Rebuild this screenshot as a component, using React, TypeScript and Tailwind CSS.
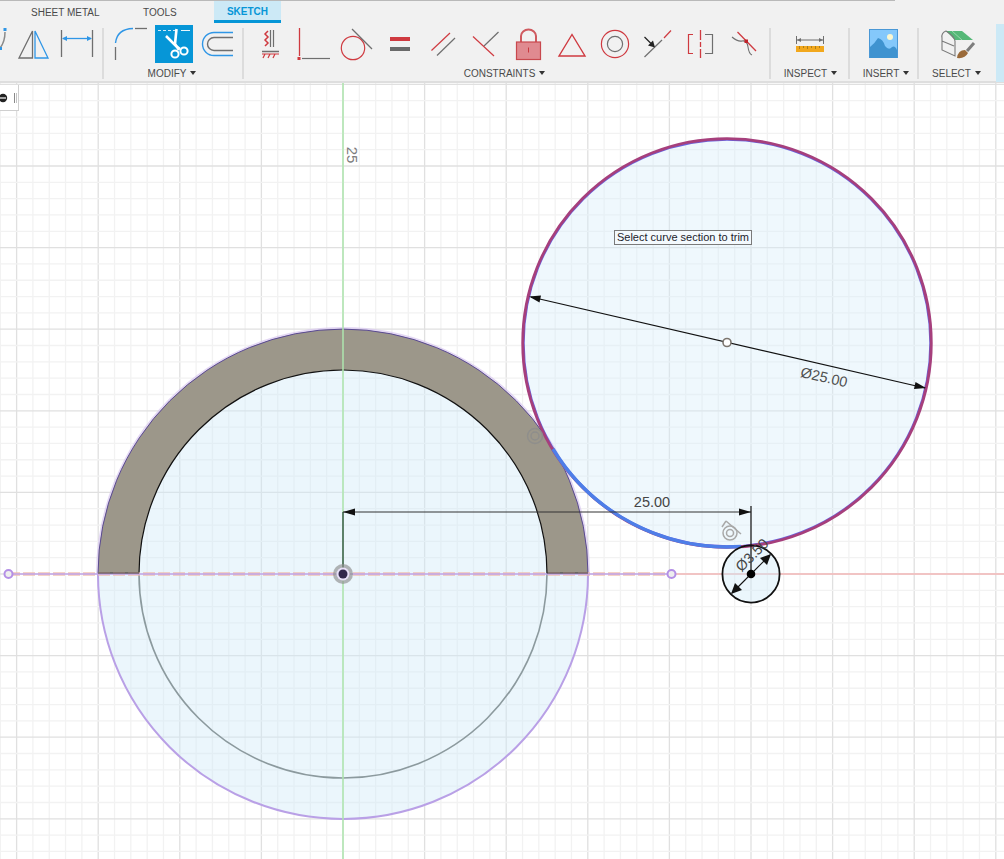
import React from "react";

const RED = "#cf3a40";
const GRAY = "#6f6f6f";
const BLUE = "#2f96e6";

function Icon({ x, w, className, children }: { x: number; w: number; className?: string; children?: React.ReactNode }) {
  return (
    <svg width={w} height={38} viewBox={`${x} 25 ${w} 38`} className={className} fill="none">
      {children}
    </svg>
  );
}

function Caret() {
  return (
    <svg width="6" height="4" viewBox="0 0 6 4" className="ml-[4px] mb-[2px]">
      <path d="M0 0H6L3 4Z" fill="#333" />
    </svg>
  );
}

function Label({ text, className }: { text: string; className?: string }) {
  return (
    <div className={`mt-[1px] flex h-[19px] items-center justify-center text-[10px] leading-none text-[#4a4a4a] ${className ?? ""}`}>
      <span>{text}</span>
      <Caret />
    </div>
  );
}

function Sep() {
  return <div className="mt-[5px] h-[51px] w-[2px] shrink-0 bg-[#dcdcdc]" />;
}

function Toolbar() {
  return (
    <div className="h-[83px] shrink-0 border-b-2 border-[#dedede] bg-[#f1f1f1] font-['Liberation_Sans',sans-serif]">
      <div className="h-[1px] w-[895px] bg-[#b9b9b9]" />
      <div className="flex h-[22px] whitespace-nowrap text-[10px] leading-none text-[#4a4a4a]">
        <div className="ml-[31px] flex w-[68px] items-center pt-[1px]">SHEET METAL</div>
        <div className="ml-[44px] flex w-[36px] items-center pt-[1px]">TOOLS</div>
        <div className="ml-[35px] flex w-[67px] items-center justify-center border-b-[3px] border-[#0696d7] bg-[#cce9f6] pt-[2px] font-bold text-[#0696d7]">
          SKETCH
        </div>
      </div>
      <div className="flex h-[59px]">
        <div className="w-[102px] shrink-0 pt-[2px]">
          <div className="flex h-[38px]">
            <Icon x={0} w={13}>
              <path d="M5 32Q5 42 0 48" stroke="#8a8a8a" strokeWidth="1.5" />
              <rect x="3.5" y="28" width="3" height="3" fill={BLUE} />
              <rect x="0" y="47" width="2" height="3" fill={BLUE} />
            </Icon>
            <Icon x={13} w={42}>
              <path d="M32.5 31L19 58H32.5Z" stroke={GRAY} strokeWidth="1.3" />
              <path d="M35 31L48 58H35Z" stroke={BLUE} strokeWidth="1.3" />
            </Icon>
            <Icon x={55} w={43}>
              <path d="M61.5 30V57M92.5 30V57" stroke={GRAY} strokeWidth="1.3" />
              <path d="M63 38.5H91" stroke={BLUE} strokeWidth="1.3" />
              <path d="M62 38.5L67 36V41ZM92 38.5L87 36V41Z" fill={BLUE} />
            </Icon>
          </div>
        </div>
        <Sep />
        <div className="w-[138px] shrink-0 pt-[2px]">
          <div className="ml-[4px] flex h-[38px]">
            <Icon x={108} w={44}>
              <path d="M135 28.5H147" stroke={GRAY} strokeWidth="1.3" />
              <path d="M115.5 43Q117 29 133 28.5" stroke={BLUE} strokeWidth="1.4" />
              <path d="M115.5 47V60" stroke={GRAY} strokeWidth="1.3" />
            </Icon>
            <Icon x={155} w={38} className="ml-[3px] bg-[#0696d7]">
              <path d="M158 30.5H177" stroke="#cfeaf8" strokeDasharray="3 2" />
              <path d="M181 30.5H190" stroke="#e8f6fc" />
              <path d="M176.5 29L175 44L179 50" stroke="#fff" strokeWidth="2.6" />
              <path d="M166 36L176 46L180 49" stroke="#fff" strokeWidth="2.6" />
              <circle cx="175" cy="54" r="3.6" stroke="#fff" strokeWidth="2" />
              <circle cx="184" cy="51" r="3.6" stroke="#fff" strokeWidth="2" />
            </Icon>
            <Icon x={196} w={42} className="ml-[3px]">
              <path d="M233 32.5H214A11.5 11.5 0 0 0 214 55.5H233" stroke={BLUE} strokeWidth="1.4" />
              <path d="M233 37.5H214A6.5 6.5 0 0 0 214 50.5H233" stroke={GRAY} strokeWidth="1.4" />
            </Icon>
          </div>
          <Label text="MODIFY" className="pr-[2px]" />
        </div>
        <Sep />
        <div className="w-[525px] shrink-0 pt-[2px]">
          <div className="ml-[4px] flex h-[38px]">
            <Icon x={248} w={43}>
              <path d="M270.5 30V47M273.5 30V47" stroke={GRAY} strokeWidth="1.2" />
              <path d="M268 31L265 34L268 37L265 40L268 43L265 46" stroke={RED} strokeWidth="1.5" />
              <path d="M262 51.5H279" stroke={GRAY} strokeWidth="1.5" />
              <path d="M262 54H279M265 54L263 58M270 54L268 58M275 54L273 58" stroke={RED} strokeWidth="1.2" />
            </Icon>
            <Icon x={291} w={43}>
              <path d="M299.5 28V56" stroke={RED} strokeWidth="1.3" />
              <rect x="297.5" y="57" width="3" height="3" fill={RED} />
              <path d="M302 58.5H330" stroke={GRAY} strokeWidth="1.2" />
            </Icon>
            <Icon x={334} w={43}>
              <circle cx="353" cy="48" r="11.7" stroke={RED} strokeWidth="1.2" />
              <path d="M352 29L372 49" stroke={GRAY} strokeWidth="1.2" />
            </Icon>
            <Icon x={377} w={43}>
              <rect x="390" y="37" width="20" height="4" fill={RED} />
              <rect x="390" y="47" width="20" height="4" fill="#6a6a6a" />
            </Icon>
            <Icon x={420} w={43}>
              <path d="M431.5 50.5L450 33" stroke={RED} strokeWidth="1.2" />
              <path d="M437 55.5L455 38" stroke={GRAY} strokeWidth="1.2" />
            </Icon>
            <Icon x={463} w={43}>
              <path d="M473 36.5L494 56" stroke={RED} strokeWidth="1.2" />
              <path d="M484 46L498.5 32" stroke={GRAY} strokeWidth="1.2" />
            </Icon>
            <Icon x={506} w={43}>
              <path d="M521 42V36A7.5 6.5 0 0 1 536 36V42" stroke="#cf5a5f" strokeWidth="2" />
              <rect x="516.5" y="42" width="24" height="17.5" fill="#e08a90" stroke="#c8484e" strokeWidth="1.2" />
              <path d="M528.5 47.5V52.5" stroke="#c8383e" strokeWidth="1" />
            </Icon>
            <Icon x={549} w={43}>
              <path d="M572 34.5L559 56H585Z" stroke={RED} strokeWidth="1.4" />
            </Icon>
            <Icon x={592} w={43}>
              <circle cx="615" cy="44" r="13.6" stroke={RED} strokeWidth="1.2" />
              <circle cx="615" cy="44" r="7.6" stroke={GRAY} strokeWidth="1.2" />
            </Icon>
            <Icon x={635} w={43}>
              <path d="M644.5 57L662 40" stroke={GRAY} strokeWidth="1.2" />
              <path d="M664 38L671 30.5" stroke={RED} strokeWidth="1.2" />
              <path d="M644.5 37L651 43.5" stroke="#222" strokeWidth="1.2" />
              <path d="M655 47.5L648 45.5L653 40.5Z" fill="#222" />
            </Icon>
            <Icon x={678} w={43}>
              <path d="M693 34.5H688.5V53.5H693" stroke={RED} strokeWidth="1.2" />
              <path d="M700.5 30V58" stroke={RED} strokeWidth="1.3" strokeDasharray="10 2 5 2 9" />
              <path d="M705 34.5H712.5V53.5H705" stroke={GRAY} strokeWidth="1.2" />
            </Icon>
            <Icon x={721} w={43}>
              <path d="M732 37Q738 42 742 41Q747 40 748 47Q749 54 752 55" stroke={GRAY} strokeWidth="1.1" />
              <path d="M737.5 32L756 51" stroke={RED} strokeWidth="1.3" />
              <rect x="744.5" y="39.5" width="3.5" height="3.5" fill="#c02228" />
            </Icon>
          </div>
          <Label text="CONSTRAINTS" className="pr-[4px]" />
        </div>
        <Sep />
        <div className="w-[77px] shrink-0 pt-[2px]">
          <div className="flex h-[38px] justify-center">
            <Icon x={791} w={38}>
              <path d="M796.5 36V44M823.5 36V44M797 40H823" stroke={GRAY} strokeWidth="1" />
              <path d="M797 40L801 38V42ZM823 40L819 38V42Z" fill={GRAY} />
              <rect x="796" y="46" width="28" height="6" fill="#f2a81d" />
              <path d="M799.5 46V49M803.5 46V48M807.5 46V49M811.5 46V48M815.5 46V49M819.5 46V48" stroke="#9a7418" strokeWidth="0.8" />
            </Icon>
          </div>
          <Label text="INSPECT" className="pl-[2px]" />
        </div>
        <Sep />
        <div className="w-[67px] shrink-0 pt-[2px]">
          <div className="flex h-[38px] justify-center">
            <Icon x={866} w={35}>
              <rect x="869.5" y="29.5" width="28" height="28" fill="#84c8fb" stroke="#4a98d6" />
              <circle cx="890" cy="37" r="3" fill="#fbf7d0" />
              <path d="M870 58V47Q875 43 878 38Q883 39 885 46Q889 51 892 47Q895 45 897 50V58Z" fill="#3f93d0" />
            </Icon>
          </div>
          <Label text="INSERT" className="pl-[5px]" />
        </div>
        <Sep />
        <div className="w-[77px] shrink-0 pt-[2px]">
          <div className="flex h-[38px] justify-center">
            <Icon x={938} w={36}>
              <path d="M944 31H960L971 40H953Z" fill="#55b877" />
              <path d="M950 31L960 40" stroke="#a9dcb9" strokeWidth="0.8" />
              <path d="M944 31Q939 33 940 38V50L953 56V41Q952 36 944 31ZM940 41L952 46" stroke="#7a7a7a" strokeWidth="1.1" />
              <path d="M972 43L965 51" stroke="#7d7d7d" strokeWidth="3" />
              <path d="M963 50Q956 50 955 58Q963 59 966 53Z" fill="#9a6a3a" />
            </Icon>
          </div>
          <Label text="SELECT" className="pr-[2px]" />
        </div>
        <div className="mt-[1px] h-[58px] flex-1 bg-[#cce9f6]" />
      </div>
    </div>
  );
}

const OX = 343;
const OY = 574;
const STEP = 16.32;
const range = (a: number, b: number) => Array.from({ length: b - a + 1 }, (_, i) => a + i);

function Canvas() {
  return (
    <svg width={1004} height={776} viewBox="0 83 1004 776" className="block" fill="none">
      {range(-21, 41).map((i) => (
        <line
          key={`v${i}`}
          x1={OX + i * STEP}
          x2={OX + i * STEP}
          y1={83}
          y2={859}
          stroke={i % 5 === 0 ? "#e0e0e0" : "#f2f2f2"}
          strokeWidth={1.3}
        />
      ))}
      {range(-30, 18).map((i) => (
        <line
          key={`h${i}`}
          x1={0}
          x2={1004}
          y1={OY + i * STEP}
          y2={OY + i * STEP}
          stroke={i % 5 === 0 ? "#e0e0e0" : "#f2f2f2"}
          strokeWidth={1.3}
        />
      ))}
      <path d="M671 574H1004" stroke="#f5b9b9" strokeWidth="1.5" />

      <path d="M98 574A245 245 0 0 0 588 574Z" fill="#cfe9f9" fillOpacity="0.42" />
      <path d="M139 574A204 204 0 0 1 547 574Z" fill="#cfe9f9" fillOpacity="0.42" />
      <circle cx="727" cy="343" r="204" fill="#d6edfb" fillOpacity="0.4" />
      <circle cx="751" cy="574" r="28.6" fill="#cfe9f9" fillOpacity="0.42" />

      <path d="M98 574A245 245 0 0 1 588 574" stroke="#d8c8f0" strokeWidth="4" opacity="0.7" />
      <path d="M98 574A245 245 0 0 1 588 574H547A204 204 0 0 0 139 574Z" fill="#9c978a" />
      <path d="M98 574A245 245 0 0 1 588 574" stroke="#5a4a92" strokeWidth="1" />
      <path d="M139 574A204 204 0 0 1 547 574" stroke="#111" strokeWidth="1.2" />
      <path d="M139 574A204 204 0 0 0 547 574" stroke="#8c9a9e" strokeWidth="1.6" />
      <path d="M98 574A245 245 0 0 0 588 574" stroke="#b9a0e6" strokeWidth="2" />

      <path d="M343 83V859" stroke="#aee6ae" strokeWidth="1.5" />
      <path d="M343 512V574" stroke="#3e5f4c" strokeWidth="1.5" />

      <path d="M8 574H671" stroke="#eeb8a8" strokeWidth="3.5" strokeDasharray="12 3" opacity="0.85" />
      <path d="M8 574H671" stroke="#c2a6ea" strokeWidth="1.5" />
      <path d="M98 573H139M547 573H588" stroke="#3a3a3a" strokeWidth="1" />
      <circle cx="8.5" cy="574" r="4" fill="#eee" stroke="#b48fe6" strokeWidth="2" />
      <circle cx="671.5" cy="574" r="4" fill="#eee" stroke="#b48fe6" strokeWidth="2" />
      <circle cx="343" cy="574" r="10" fill="#8e8e8e" fillOpacity="0.65" />
      <circle cx="343" cy="574" r="6.5" fill="#e8e0f8" />
      <circle cx="343" cy="574" r="4.5" fill="#32284c" />

      <circle cx="727" cy="343" r="203" stroke="#6a62dc" strokeWidth="1.4" />
      <circle cx="727" cy="343" r="204.3" stroke="#a63f7c" strokeWidth="2.8" />
      <path d="M553 449A204 204 0 0 0 741 546.5" stroke="#4e7ee8" strokeWidth="3.4" />

      <circle cx="751" cy="574" r="28.6" stroke="#111" strokeWidth="1.8" />

      <g stroke="#8d8d8d" strokeWidth="1.4" opacity="0.85">
        <circle cx="535" cy="436" r="7.5" />
        <circle cx="535" cy="436" r="4" />
      </g>
      <g stroke="#a8a8a8" strokeWidth="1.5">
        <circle cx="730" cy="533" r="7" />
        <circle cx="730" cy="533" r="3.5" />
        <path d="M726 521L741 534M726 521L722 527" />
      </g>

      <path d="M343 512H751" stroke="#333" strokeWidth="1.2" />
      <path d="M751 506V574" stroke="#111" strokeWidth="1.2" />
      <path d="M751 512L739 508.5V515.5Z" fill="#111" />
      <path d="M343 512L355 508.5V515.5Z" fill="#111" />
      <text x="652" y="506.5" textAnchor="middle" fontFamily="Liberation Sans, sans-serif" fontSize="14.5" fill="#454545">25.00</text>

      <path d="M531 297L925 388" stroke="#111" strokeWidth="1.2" />
      <path d="M529 296.5L541 295.5L539.5 302.5Z" fill="#111" />
      <path d="M926 388L914 389L915.5 382Z" fill="#111" />
      <circle cx="727" cy="342.5" r="4" fill="#fff" stroke="#7b756e" strokeWidth="1.6" />
      <text transform="translate(823 382) rotate(13)" textAnchor="middle" fontFamily="Liberation Sans, sans-serif" fontSize="14.5" fill="#505050">Ø25.00</text>

      <path d="M732 593L770 555" stroke="#111" strokeWidth="1.2" />
      <path d="M731 594L735 583L742 590Z" fill="#111" />
      <path d="M771 554L767 565L760 558Z" fill="#111" />
      <circle cx="751" cy="574" r="4.3" fill="#000" />
      <text transform="translate(755.5 558.5) rotate(-45)" textAnchor="middle" fontFamily="Liberation Sans, sans-serif" fontSize="14.5" fill="#454545">Ø3.50</text>

      <text transform="translate(347 155) rotate(90)" textAnchor="middle" fontFamily="Liberation Sans, sans-serif" fontSize="15" fill="#7c7c7c">25</text>
    </svg>
  );
}

export default function App() {
  return (
    <div className="relative flex h-[859px] w-[1004px] flex-col overflow-hidden bg-white">
      <Toolbar />
      <Canvas />
      <div className="absolute left-0 top-[85px] flex h-[26px] w-[19px] items-center border-b border-r border-[#cfcfcf] bg-white">
        <svg width="18" height="16" viewBox="0 0 18 16" fill="none">
          <circle cx="3" cy="8" r="4.2" fill="#222" />
          <path d="M0 8H6" stroke="#fff" strokeWidth="1.2" />
          <path d="M14.5 3V13" stroke="#8a8a8a" />
          <path d="M16.5 3V13" stroke="#c4c4c4" />
        </svg>
      </div>
      <div className="absolute left-[614px] top-[230px] flex h-[15px] w-[138px] items-center justify-center border border-[#7a7a7a] bg-[#f3f9fd] font-['Liberation_Sans',sans-serif] text-[11px] leading-none text-[#1c1c2c]">
        Select curve section to trim
      </div>
    </div>
  );
}
